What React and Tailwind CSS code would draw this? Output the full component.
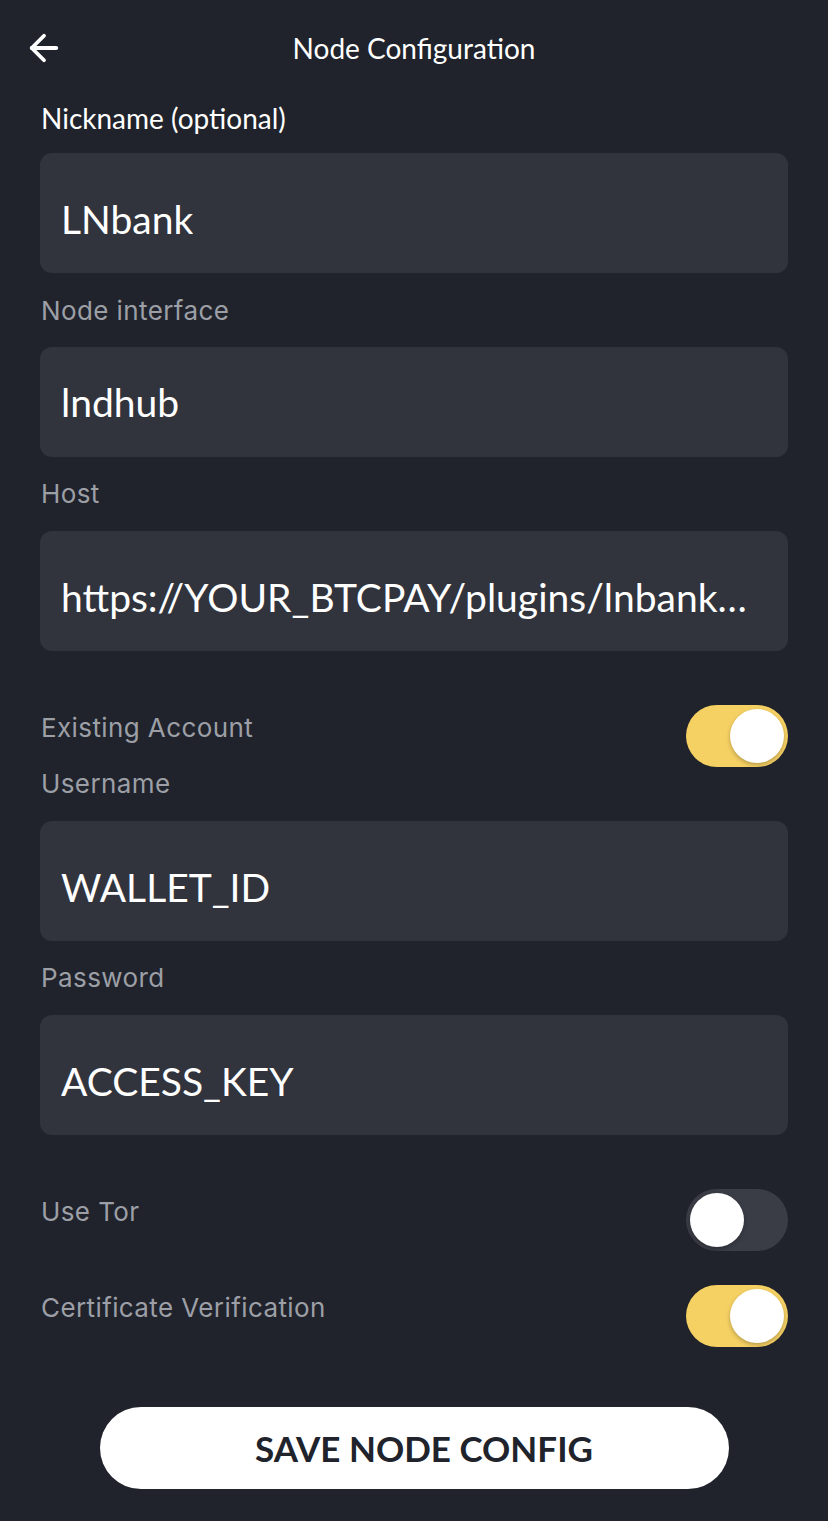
import { ArrowLeft } from "lucide-react";

const lato = "font-['Lato','Noto_Sans',sans-serif]";
const inter = "font-['Inter','Noto_Sans',sans-serif]";

const Label = ({ children, className = "" }) => (
  <div className={`${inter} text-[26px] tracking-[0.4px] leading-[34px] text-[#9c9fa6] ${className}`}>{children}</div>
);

const Field = ({ value, h = "h-[120px] pt-[12px]", pr = "pr-[18px]" }) => (
  <div className={`${h} ${pr} rounded-[12px] bg-[#31343d] flex items-center pl-[21px]`}>
    <span className={`${lato} text-[39px] text-white truncate`}>{value}</span>
  </div>
);

const Toggle = ({ on }) => (
  <div
    className={`w-[102px] h-[62px] rounded-full flex items-center px-[4px] shrink-0 ${
      on ? "bg-[#f5d063] justify-end" : "bg-[#3a3d46] justify-start"
    }`}
  >
    <div className="w-[54px] h-[54px] rounded-full bg-white shadow-[0_2px_4px_rgba(0,0,0,0.25)]" />
  </div>
);

const ToggleRow = ({ label, on, className = "" }) => (
  <div className={`flex justify-between items-start ${className}`}>
    <Label className="pt-[6px]">{label}</Label>
    <Toggle on={on} />
  </div>
);

export default function App() {
  return (
    <div className="w-[828px] min-h-[1521px] bg-[#20232b] text-white">
      <div className="relative h-[96px] flex items-center justify-center">
        <ArrowLeft className="absolute left-[23px] top-[27px] w-[42px] h-[42px]" strokeWidth={2.2} />
        <h1 className={`${lato} text-[28px]`}>Node Configuration</h1>
      </div>

      <div className="px-[40px]">
        <div className={`${lato} text-[28px] leading-[34px] mt-[5px] pl-[1px]`}>Nickname (optional)</div>
        <div className="mt-[18px]">
          <Field value="LNbank" />
        </div>

        <Label className="mt-[21px] pl-[1px]">Node interface</Label>
        <div className="mt-[19px]">
          <Field value="lndhub" h="h-[110px]" />
        </div>

        <Label className="mt-[20px] pl-[1px]">Host</Label>
        <div className="mt-[20px]">
          <Field value="https://YOUR_BTCPAY/plugins/lnbank/api/lndhub" pr="pr-[30px]" />
        </div>

        <ToggleRow label="Existing Account" on className="mt-[54px] pl-[1px]" />

        <Label className="pl-[1px]">Username</Label>
        <div className="mt-[20px]">
          <Field value="WALLET_ID" />
        </div>

        <Label className="mt-[20px] pl-[1px]">Password</Label>
        <div className="mt-[20px]">
          <Field value="ACCESS_KEY" />
        </div>

        <ToggleRow label="Use Tor" on={false} className="mt-[54px] pl-[1px]" />
        <ToggleRow label="Certificate Verification" on className="mt-[34px] pl-[1px]" />
      </div>

      <div className="flex justify-center mt-[60px]">
        <button
          className={`${lato} w-[629px] h-[82px] rounded-full bg-white text-[#20232b] font-bold text-[35px] pl-[20px]`}
        >
          SAVE NODE CONFIG
        </button>
      </div>
    </div>
  );
}
